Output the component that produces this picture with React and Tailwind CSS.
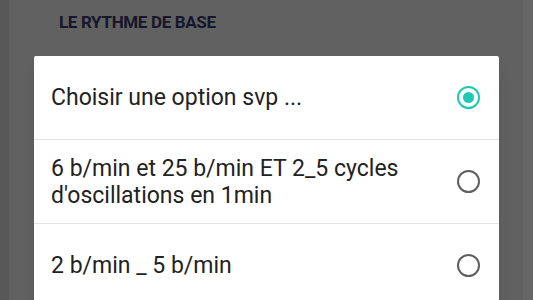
import React, { useState } from 'react';

const options = [
  'Choisir une option svp ...',
  "6 b/min et 25 b/min ET 2_5 cycles d'oscillations en 1min",
  '2 b/min _ 5 b/min',
];

const Radio = ({ checked }) => (
  <div
    className={`w-[23px] h-[23px] rounded-full border-[2.5px] flex items-center justify-center flex-shrink-0 ${
      checked ? 'border-[#1ccab3]' : 'border-[#5f5f5f]'
    }`}
  >
    {checked && <div className="w-[11px] h-[11px] rounded-full bg-[#1ccab3]"></div>}
  </div>
);

export default function App() {
  const [selected, setSelected] = useState(0);

  return (
    <div className="w-full h-[300px] overflow-hidden flex bg-[#616161] font-['Roboto',sans-serif]">
      <div className="w-[9px] bg-[#585858]"></div>
      <div className="flex-1 flex flex-col">
        <div className="pt-[12px] pl-[50px] text-[17px] leading-[20px] font-bold tracking-[-0.02em] text-[#16162c]">
          LE RYTHME DE BASE
        </div>
        <div className="mt-[24px] ml-[25px] mr-[24px] bg-white rounded-[2px] shadow-lg">
          {options.map((label, i) => (
            <div
              key={i}
              onClick={() => setSelected(i)}
              className="h-[84px] flex items-center pl-[17px] pr-[19px] border-b border-[#e4e4e4] cursor-pointer"
            >
              <div className="flex-1 pr-[30px] text-[23px] leading-[27px] text-[#222222]">{label}</div>
              <Radio checked={selected === i} />
            </div>
          ))}
        </div>
      </div>
      <div className="w-[10px] bg-[#666666]"></div>
    </div>
  );
}
